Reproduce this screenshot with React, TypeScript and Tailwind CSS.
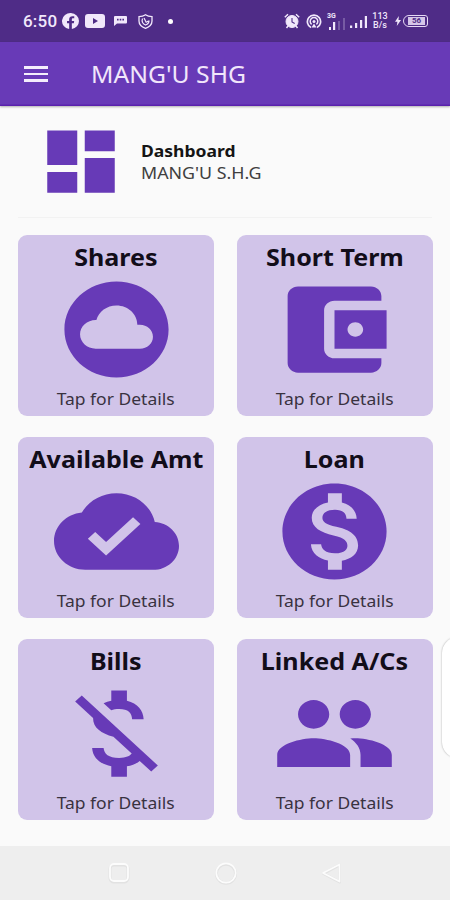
import React from "react";

const ICONS = {
  cloud:
    "M12 2C6.48 2 2 6.48 2 12s4.48 10 10 10 10-4.48 10-10S17.52 2 12 2zm4.5 14H8c-1.66 0-3-1.34-3-3s1.34-3 3-3l.14.01C8.58 8.28 10.13 7 12 7c2.21 0 4 1.79 4 4h.5c1.38 0 2.5 1.12 2.5 2.5S17.88 16 16.5 16z",
  wallet:
    "M21 18v1c0 1.1-.9 2-2 2H5c-1.11 0-2-.9-2-2V5c0-1.1.89-2 2-2h14c1.1 0 2 .9 2 2v1h-9c-1.11 0-2 .9-2 2v8c0 1.1.89 2 2 2h9zm-9-2h10V8H12v8zm4-2.5c-.83 0-1.5-.67-1.5-1.5s.67-1.5 1.5-1.5 1.5.67 1.5 1.5-.67 1.5-1.5 1.5z",
  cloudDone:
    "M19.35 10.04C18.67 6.59 15.64 4 12 4 9.11 4 6.6 5.64 5.35 8.04 2.34 8.36 0 10.91 0 14c0 3.31 2.69 6 6 6h13c2.76 0 5-2.24 5-5 0-2.64-2.05-4.78-4.65-4.96zM10 17l-3.5-3.5 1.41-1.41L10 14.17 15.18 9l1.41 1.41L10 17z",
  money:
    "M12 2C6.48 2 2 6.48 2 12s4.48 10 10 10 10-4.48 10-10S17.52 2 12 2zm1.41 16.09V20h-2.67v-1.93c-1.71-.36-3.16-1.46-3.27-3.4h1.96c.1 1.05.82 1.87 2.65 1.87 1.96 0 2.4-.98 2.4-1.59 0-.83-.44-1.61-2.67-2.14-2.48-.6-4.18-1.62-4.18-3.67 0-1.72 1.39-2.84 3.11-3.21V4h2.67v1.95c1.86.45 2.79 1.86 2.85 3.39H14.3c-.05-1.11-.64-1.87-2.22-1.87-1.5 0-2.4.68-2.4 1.64 0 .84.65 1.39 2.67 1.91s4.18 1.39 4.18 3.91c-.02 1.83-1.38 2.83-3.12 3.16z",
  moneyOff:
    "M12.5 6.9c1.78 0 2.44.85 2.5 2.1h2.21c-.07-1.72-1.12-3.3-3.21-3.81V3h-3v2.16c-.53.12-1.03.3-1.48.54l1.47 1.47c.41-.17.91-.27 1.51-.27zM5.33 4.06L4.06 5.33 7.5 8.77c0 2.08 1.56 3.21 3.91 3.91l3.51 3.51c-.34.48-1.05.91-2.42.91-2.06 0-2.87-.92-2.98-2.1h-2.2c.12 2.19 1.76 3.42 3.68 3.83V21h3v-2.15c.96-.18 1.82-.55 2.45-1.12l2.22 2.22 1.27-1.27L5.33 4.06z",
  group:
    "M16 11c1.66 0 2.99-1.34 2.99-3S17.66 5 16 5c-1.66 0-3 1.34-3 3s1.34 3 3 3zm-8 0c1.66 0 2.99-1.34 2.99-3S9.66 5 8 5C6.34 5 5 6.34 5 8s1.34 3 3 3zm0 2c-2.33 0-7 1.17-7 3.5V19h14v-2.5c0-2.33-4.67-3.5-7-3.5zm8 0c-.29 0-.62.02-.97.05 1.16.84 1.97 1.97 1.97 3.45V19h6v-2.5c0-2.33-4.67-3.5-7-3.5z",
};

const CARDS: { title: string; icon: keyof typeof ICONS }[] = [
  { title: "Shares", icon: "cloud" },
  { title: "Short Term", icon: "wallet" },
  { title: "Available Amt", icon: "cloudDone" },
  { title: "Loan", icon: "money" },
  { title: "Bills", icon: "moneyOff" },
  { title: "Linked A/Cs", icon: "group" },
];

function StatusBar() {
  return (
    <div className="flex h-[42px] shrink-0 items-center bg-[#4f2c87] pl-[23px] pr-[22px] text-[#f1e8fb]">
      <span className="w-[35px] whitespace-nowrap font-[Roboto] text-[17px] font-medium leading-none tracking-[0.2px]">6:50</span>
      <svg className="ml-[4px] h-[16px] w-[17px]" viewBox="0 0 24 24" preserveAspectRatio="none" fill="currentColor">
        <path d="M24 12a12 12 0 1 0-13.9 11.9v-8.4H7.1V12h3V9.400c0-3 1.800-4.700 4.600-4.700 1.300 0 2.600.2 2.600.2v3h-1.500c-1.500 0-1.900.9-1.900 1.800V12h3.300l-.5 3.500h-2.800v8.400A12 12 0 0 0 24 12z" />
      </svg>
      <svg className="ml-[6px] h-[14px] w-[20px]" viewBox="0 0 20 14" fill="currentColor" fillRule="evenodd">
        <path d="M3 0h14q3 0 3 3v8q0 3-3 3H3q-3 0-3-3V3q0-3 3-3zM8 4v6l5-3z" />
      </svg>
      <svg className="ml-[9px] h-[10px] w-[13px]" viewBox="0 0 13 10" fill="currentColor" fillRule="evenodd">
        <path d="M1 0h11q1 0 1 1v5.500q0 1-1 1H3L0 10V1q0-1 1-1zM3 2.800v1.600h1.600V2.800zM5.700 2.800v1.600h1.600V2.800zM8.400 2.800v1.600H10V2.800z" />
      </svg>
      <svg className="ml-[11px] h-[15px] w-[15px]" viewBox="0 0 15 15" fill="none" stroke="currentColor">
        <path d="M7.500 .8Q10 2.500 14 2.600V7q0 5-6.500 7.300Q1 12 1 7V2.600Q5 2.500 7.500.8z" strokeWidth="1.300" />
        <path d="M4.500 4.500q-1.500 4.500 3 6.500 3.800-1.500 3.500-4.500M6 4l2.200 4.200L10.500 7" strokeWidth="1.200" />
      </svg>
      <span className="ml-[15px] size-[5px] rounded-full bg-white" />

      <svg className="ml-auto h-[16px] w-[16px]" viewBox="0 0 16 16" fill="none" stroke="currentColor">
        <circle cx="8" cy="8.500" r="6" fill="currentColor" />
        <path d="M.8 4.200 4 1.300M15.200 4.200 12 1.300M4 13l-1.500 2M12 13l1.500 2" strokeWidth="1.500" />
        <path d="M8 5v4l2.700 1.500" stroke="#4f2c87" strokeWidth="1.100" />
      </svg>
      <svg className="ml-[6px] h-[15px] w-[16px]" viewBox="0 0 16 15" fill="none" stroke="currentColor">
        <path d="M5 13.600a6.600 6.600 0 1 1 6 0" strokeWidth="1.700" />
        <path d="M5.600 10.300a3.800 3.800 0 1 1 4.800 0" strokeWidth="1.500" />
        <circle cx="8" cy="7.600" r="1.500" fill="currentColor" stroke="none" />
        <path d="M8 9.500 5.500 13.500h5z" fill="currentColor" stroke="none" />
      </svg>
      <div className="ml-[5px] flex h-[17px] w-[19px] flex-col justify-between">
        <span className="h-[7px] font-[Roboto] text-[7px] font-bold leading-[7px]">3G</span>
        <svg className="-mt-[3px] h-[12px] w-[19px]" viewBox="0 0 19 12" fill="currentColor">
          <path d="M2 9h2v3H2zM6 4h2.200v8H6z" />
          <path d="M11 3h2v9h-2zM16 0h2v12h-2z" opacity=".25" />
        </svg>
      </div>
      <svg className="ml-[4px] h-[13px] w-[17px]" viewBox="0 0 17 13" fill="currentColor">
        <path d="M0 10.500h2.200V13H0zM5 8h2.200v5H5zM10 5h2.200v8H10zM14.800 1H17v12h-2.200z" />
      </svg>
      <span className="ml-[4px] flex w-[18px] flex-col items-center font-[Roboto] text-[9px] font-medium leading-[9px]">
        <span>113</span>
        <span>B/s</span>
      </span>
      <svg className="ml-[6px] h-[10px] w-[6px]" viewBox="0 0 6 10" fill="currentColor">
        <path d="M3.800 0 0 5.700h2.400L1.800 10 6 4H3.500z" />
      </svg>
      <span className="ml-[2px] flex h-[12px] w-[25px] items-center justify-center rounded-l-[6px] rounded-r-[3px] border-[1.500px] border-[#e6daf5] p-[1px]">
        <span className="ml-[2px] flex h-[8px] w-[17px] items-center justify-center bg-[#d5c6e8] font-[Roboto] text-[8px] font-bold leading-none text-[#4f2c87]">56</span>
      </span>
    </div>
  );
}

function AppBar() {
  return (
    <header className="flex h-[64px] shrink-0 items-center bg-[#683ab7] pl-[24px] shadow-[inset_0_-1.5px_0_#5a22ad,0_1px_2px_rgba(0,0,0,0.3)]">
      <div className="flex w-[23.500px] flex-col gap-[4px]">
        <span className="h-[2.500px] bg-[#f4edfc]" />
        <span className="h-[2.500px] bg-[#f4edfc]" />
        <span className="h-[2.500px] bg-[#f4edfc]" />
      </div>
      <h1 className="ml-[43.500px] mt-[1px] origin-left scale-x-[1.075] whitespace-nowrap text-[23px] leading-none text-[#f1e6fb]">MANG'U SHG</h1>
    </header>
  );
}

function Card({ title, icon }: { title: string; icon: keyof typeof ICONS }) {
  return (
    <button className="flex h-[180.500px] flex-col items-center rounded-[9px] bg-[#d1c4e9]">
      <span className="mt-[6px] h-[31px] scale-x-[1.045] whitespace-nowrap text-[24px] font-bold leading-[32px] text-[#120d19]">{title}</span>
      <svg className="h-[115px] w-[125px] shrink-0" viewBox="0 0 24 24" preserveAspectRatio="none" fill="#673ab7">
        <path d={ICONS[icon]} />
      </svg>
      <span className="mt-[1px] scale-x-[1.060] whitespace-nowrap text-[16.500px] leading-[22px] text-[#39323f]">Tap for Details</span>
    </button>
  );
}

export default function App() {
  return (
    <div className="relative flex h-[900px] w-[450px] flex-col overflow-hidden bg-[#fafafa] font-['Noto_Sans',sans-serif]">
      <StatusBar />
      <AppBar />
      <main className="flex grow flex-col px-[18px]">
        <section className="flex h-[112px] items-center border-b border-[#f2f2f2] pl-[17.500px]">
          <svg className="h-[83px] w-[90px]" viewBox="0 0 24 24" preserveAspectRatio="none" fill="#673ab7">
            <path d="M3 13h8V3H3v10zm0 8h8v-6H3v6zm10 0h8V11h-8v10zm0-18v6h8V3h-8z" />
          </svg>
          <div className="ml-[15.500px] mt-[1px] flex flex-col">
            <span className="origin-left scale-x-[1.095] text-[16px] font-bold leading-[22px] text-[#151515]">Dashboard</span>
            <span className="origin-left scale-x-[1.080] whitespace-nowrap text-[16.500px] leading-[22px] text-[#404040]">MANG'U S.H.G</span>
          </div>
        </section>
        <section className="mt-[17px] grid grid-cols-[196px_196px] gap-x-[22.500px] gap-y-[21.500px]">
          {CARDS.map((card) => (
            <Card key={card.title} title={card.title} icon={card.icon} />
          ))}
        </section>
      </main>
      <nav className="flex h-[54px] shrink-0 items-center justify-between bg-[#eeeeee] pl-[108px] pr-[107px]">
        <svg className="h-[22px] w-[22px]" viewBox="0 0 22 22" fill="none">
          <rect x="2" y="3" width="18" height="17" rx="4" stroke="#e2e2e2" strokeWidth="3" />
          <rect x="2" y="2" width="18" height="17" rx="4" stroke="#fcfcfc" strokeWidth="1.800" />
        </svg>
        <svg className="h-[24px] w-[24px]" viewBox="0 0 24 24" fill="none">
          <circle cx="12" cy="12.700" r="9.500" stroke="#e2e2e2" strokeWidth="3" />
          <circle cx="12" cy="12" r="9.700" stroke="#fcfcfc" strokeWidth="1.800" />
        </svg>
        <svg className="h-[22px] w-[22px]" viewBox="0 0 22 22" fill="none" strokeLinejoin="round">
          <path d="M2.500 11.500 18.500 3v17z" stroke="#e2e2e2" strokeWidth="3" />
          <path d="M2 11 18.500 2.500v17z" stroke="#fcfcfc" strokeWidth="1.800" />
        </svg>
      </nav>
      <div className="absolute -right-[16px] top-[637px] h-[121px] w-[24px] rounded-l-[16px] bg-white shadow-[0_0_2px_rgba(0,0,0,0.35)]" />
    </div>
  );
}
